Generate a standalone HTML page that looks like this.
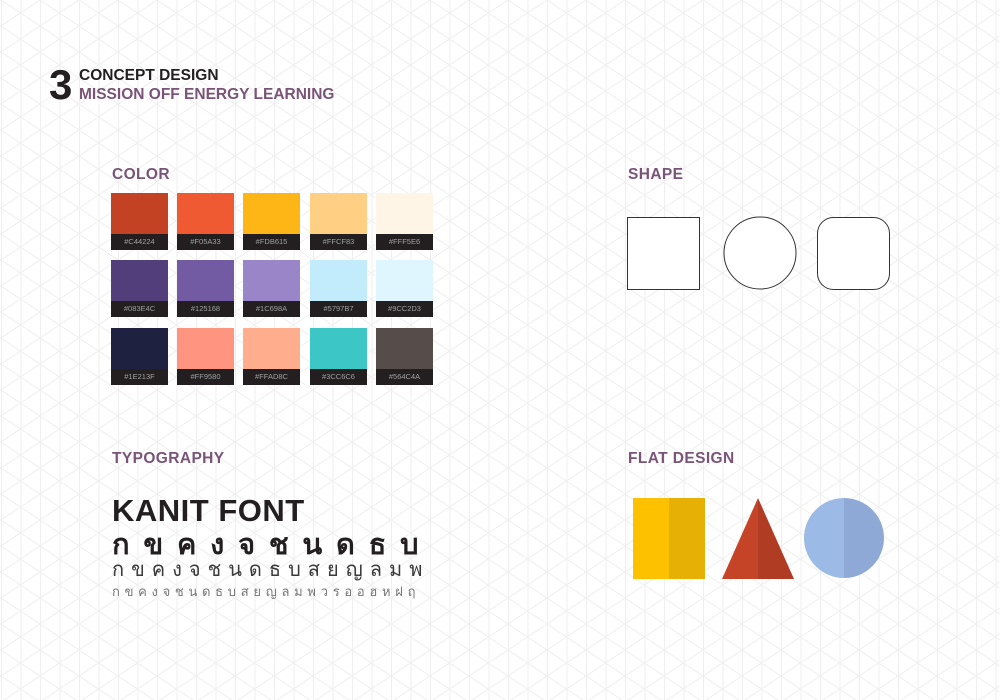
<!DOCTYPE html>
<html><head><meta charset="utf-8"><style>
body{margin:0;width:1000px;height:700px;position:relative;background:#fff;overflow:hidden;font-family:"Liberation Sans",sans-serif}
.bg{position:absolute;left:0;top:0}
.a{position:absolute;white-space:nowrap}
.h{color:#7a5478;font-weight:bold;font-size:15.5px;letter-spacing:0.4px}
.sw{position:absolute;width:57px;height:57px}
.sw i{position:absolute;left:0;right:0;bottom:0;height:16px;background:#231f20;color:#a0a0a0;font-style:normal;font-size:7.5px;line-height:16px;text-align:center}
</style></head><body>
<svg class="bg" width="1000" height="700">
<defs><pattern id="g" width="39" height="26" patternUnits="userSpaceOnUse" x="1">
<g stroke="#efefef" stroke-width="1" fill="none">
<line x1="0.5" y1="0" x2="0.5" y2="26"/><line x1="20" y1="0" x2="20" y2="26"/>
<line x1="0" y1="0" x2="39" y2="26"/><line x1="0" y1="26" x2="39" y2="0"/>
</g></pattern></defs>
<rect width="1000" height="700" fill="url(#g)"/>
</svg>
<div class="a" style="left:49px;top:63px;font-size:42px;font-weight:bold;color:#231f20;line-height:44px">3</div>
<div class="a" style="left:79px;top:67px;font-size:15.5px;font-weight:bold;color:#231f20">CONCEPT DESIGN</div>
<div class="a" style="left:79px;top:86px;font-size:15.5px;font-weight:bold;color:#7a5478">MISSION OFF ENERGY LEARNING</div>
<div class="a h" style="left:112px;top:166px">COLOR</div>
<div class="a h" style="left:628px;top:166px">SHAPE</div>
<div class="a h" style="left:112px;top:450px">TYPOGRAPHY</div>
<div class="a h" style="left:628px;top:450px">FLAT DESIGN</div>

<div class="sw" style="left:111px;top:193px;background:#c44224"><i>#C44224</i></div>
<div class="sw" style="left:177px;top:193px;background:#f05a33"><i>#F05A33</i></div>
<div class="sw" style="left:243px;top:193px;background:#fdb615"><i>#FDB615</i></div>
<div class="sw" style="left:310px;top:193px;background:#ffcf83"><i>#FFCF83</i></div>
<div class="sw" style="left:376px;top:193px;background:#fff5e6"><i>#FFF5E6</i></div>
<div class="sw" style="left:111px;top:260px;background:#533e7c"><i>#083E4C</i></div>
<div class="sw" style="left:177px;top:260px;background:#725ba3"><i>#125168</i></div>
<div class="sw" style="left:243px;top:260px;background:#9985c7"><i>#1C698A</i></div>
<div class="sw" style="left:310px;top:260px;background:#c2ecfc"><i>#5797B7</i></div>
<div class="sw" style="left:376px;top:260px;background:#e0f6fe"><i>#9CC2D3</i></div>
<div class="sw" style="left:111px;top:328px;background:#1e213f"><i>#1E213F</i></div>
<div class="sw" style="left:177px;top:328px;background:#ff9580"><i>#FF9580</i></div>
<div class="sw" style="left:243px;top:328px;background:#ffad8c"><i>#FFAD8C</i></div>
<div class="sw" style="left:310px;top:328px;background:#3cc6c6"><i>#3CC6C6</i></div>
<div class="sw" style="left:376px;top:328px;background:#564c4a"><i>#564C4A</i></div>

<svg class="a" style="left:0;top:0" width="1000" height="700">
<rect x="627.5" y="217.5" width="72" height="72" fill="#fff" stroke="#333" stroke-width="1"/>
<circle cx="760" cy="253" r="36" fill="#fff" stroke="#333" stroke-width="1"/>
<rect x="817.5" y="217.5" width="72" height="72" rx="16" fill="#fff" stroke="#333" stroke-width="1"/>
<rect x="633" y="498" width="36" height="81" fill="#fdc100"/>
<rect x="669" y="498" width="36" height="81" fill="#e6b004"/>
<polygon points="758,498 722,579 758,579" fill="#c54326"/>
<polygon points="758,498 794,579 758,579" fill="#b03c24"/>
<path d="M844,498 A40,40 0 0 0 844,578 Z" fill="#9bbae6"/>
<path d="M844,498 A40,40 0 0 1 844,578 Z" fill="#8ea9d5"/>
</svg>

<div class="a" style="left:112px;top:493px;font-size:31px;font-weight:bold;color:#231f20;letter-spacing:0.5px">KANIT FONT</div>
<div class="a" style="left:112px;top:521px;font-size:29px;font-weight:bold;color:#231f20;letter-spacing:13.8px">กขคงจชนดธบ</div>
<div class="a" style="left:112px;top:553px;font-size:20px;color:#3a3a3a;letter-spacing:7px">กขคงจชนดธบสยญลมพ</div>
<div class="a" style="left:112px;top:581px;font-size:13px;color:#777;letter-spacing:4.7px">กขคงจชนดธบสยญลมพวรออฮหฝฤ</div>
</body></html>
